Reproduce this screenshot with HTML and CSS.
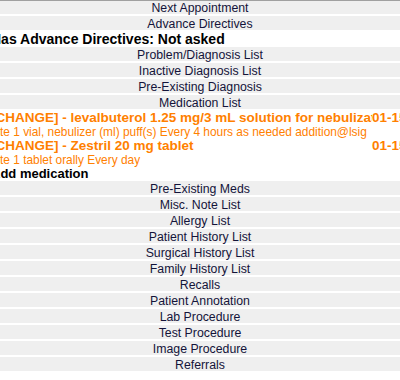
FILE: index.html
```html
<!DOCTYPE html>
<html>
  <head>
    <title>Patient Chart</title>
    <link rel="stylesheet" href="styles.css">
  </head>
  <body>
    <div class="panel">
      <div class="nav-row first">Next Appointment</div>
      <div class="nav-row">Advance Directives</div>
      <div class="info-line">Has Advance Directives: Not asked</div>
      <div class="nav-row">Problem/Diagnosis List</div>
      <div class="nav-row">Inactive Diagnosis List</div>
      <div class="nav-row">Pre-Existing Diagnosis</div>
      <div class="nav-row">Medication List</div>

      <div class="med-list">
        <div class="med-row">
          <span class="med-name">[CHANGE] - levalbuterol 1.25 mg/3 mL solution for nebulization</span>
          <span class="med-date">01-15-2024</span>
        </div>
        <div class="med-sig">te 1 vial, nebulizer (ml) puff(s) Every 4 hours as needed addition@lsig</div>
        <div class="med-row">
          <span class="med-name">[CHANGE] - Zestril 20 mg tablet</span>
          <span class="med-date">01-15-2024</span>
        </div>
        <div class="med-sig">te 1 tablet orally Every day</div>
        <div class="med-add">Add medication</div>
      </div>

      <div class="nav-row">Pre-Existing Meds</div>
      <div class="nav-row">Misc. Note List</div>
      <div class="nav-row">Allergy List</div>
      <div class="nav-row">Patient History List</div>
      <div class="nav-row">Surgical History List</div>
      <div class="nav-row">Family History List</div>
      <div class="nav-row">Recalls</div>
      <div class="nav-row">Patient Annotation</div>
      <div class="nav-row">Lab Procedure</div>
      <div class="nav-row">Test Procedure</div>
      <div class="nav-row">Image Procedure</div>
      <div class="nav-row">Referrals</div>
    </div>
  </body>
</html>
```

FILE: styles.css
```css
html,
body {
  overflow: hidden;
}

body {
  margin: 0;
  background: #fff;
  font-family: "Liberation Sans", Arial, sans-serif;
}

/* the chart is a bit wider than the window and scrolled a few px */
.panel {
  width: 418px;
  margin-left: -9px;
}

.nav-row {
  height: 14px;
  box-sizing: border-box;
  padding-top: 1px;
  margin-bottom: 2px;
  background: #efefef;
  color: #14143a;
  font-size: 12.3px;
  line-height: 14px;
  text-align: center;
  white-space: nowrap;
}

.nav-row.first {
  border-top: 1px solid #a0a0a0;
  padding-top: 0;
}

.info-line {
  color: #000;
  font-size: 14px;
  font-weight: bold;
  line-height: 15px;
  white-space: nowrap;
}

.med-row {
  display: flex;
  color: #ff8000;
  font-size: 13.5px;
  font-weight: bold;
  line-height: 14px;
  white-space: nowrap;
}

.med-name {
  flex: 1;
  min-width: 0;
  overflow: hidden;
}

.med-date {
  flex: 0 0 37px;
  min-width: 0;
}

.med-sig {
  padding-left: 9px;
  color: #ff8000;
  font-size: 11.9px;
  line-height: 14px;
  white-space: nowrap;
}

.med-add {
  color: #000;
  font-size: 13px;
  font-weight: bold;
  line-height: 14px;
}
```
